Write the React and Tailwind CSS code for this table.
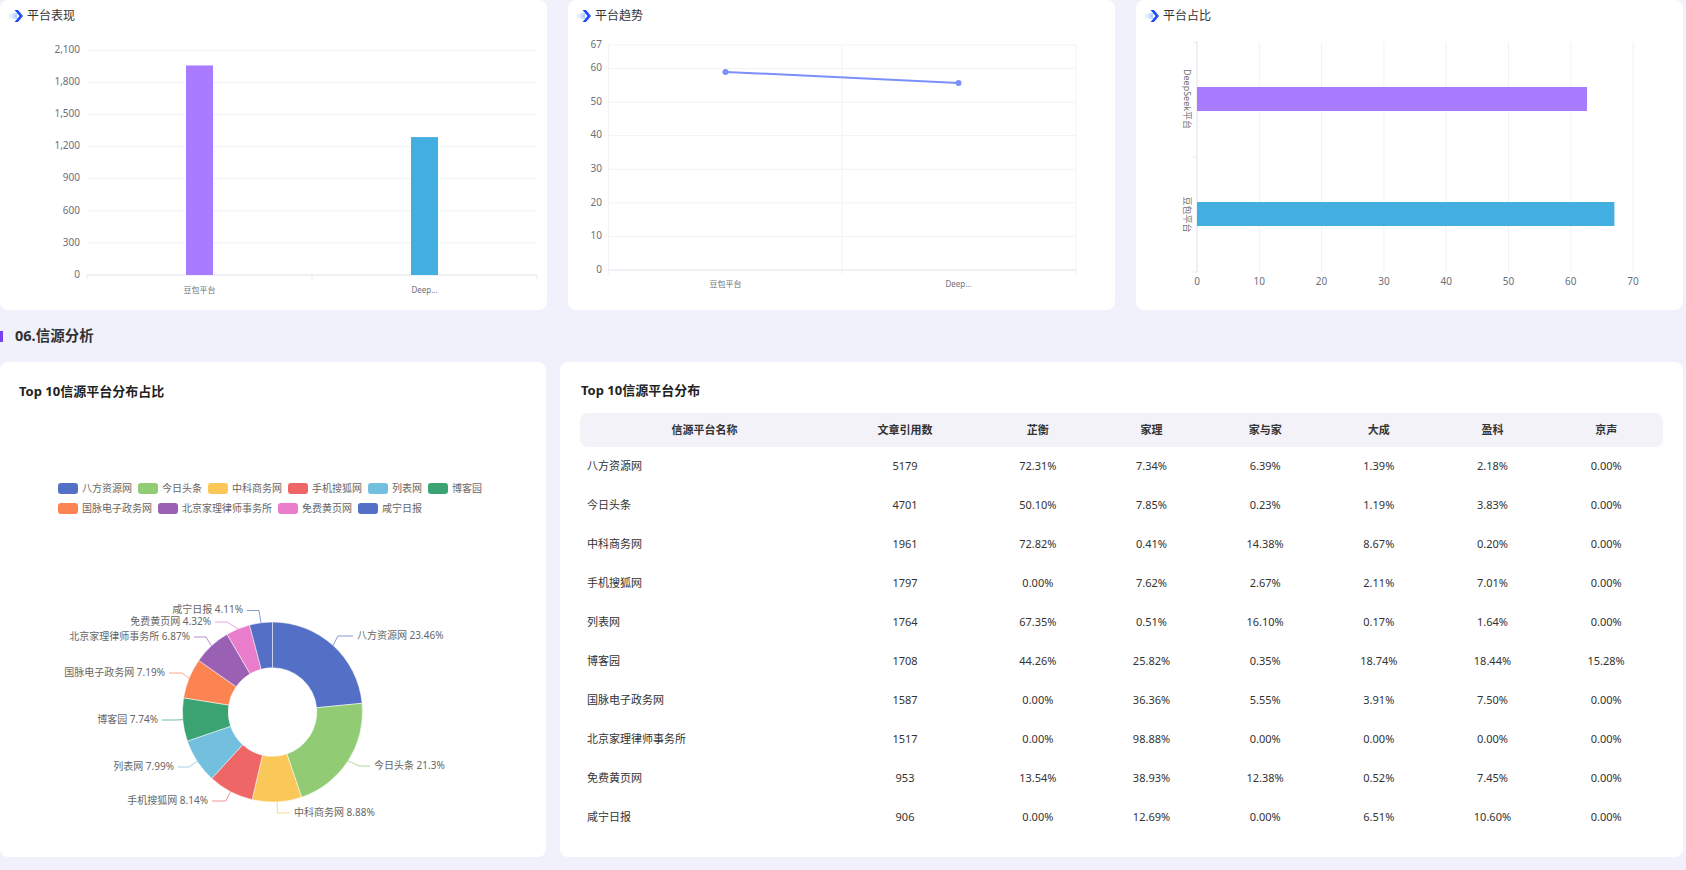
import React from 'react';

const PIE = [
  { name: '八方资源网', value: 23.46, color: '#5470c6', tx: 357, ty: 636, anchor: 'start', bx: 338 },
  { name: '今日头条', value: 21.3, color: '#91cc75', tx: 374, ty: 766, anchor: 'start', bx: 359 },
  { name: '中科商务网', value: 8.88, color: '#fac858', tx: 294, ty: 813, anchor: 'start', bx: 277.5 },
  { name: '手机搜狐网', value: 8.14, color: '#ee6666', tx: 208, ty: 801, anchor: 'end', bx: 225.7 },
  { name: '列表网', value: 7.99, color: '#73c0de', tx: 174, ty: 767, anchor: 'end', bx: 189 },
  { name: '博客园', value: 7.74, color: '#3ba272', tx: 158, ty: 720, anchor: 'end', bx: 175 },
  { name: '国脉电子政务网', value: 7.19, color: '#fc8452', tx: 165, ty: 673, anchor: 'end', bx: 182 },
  { name: '北京家理律师事务所', value: 6.87, color: '#9a60b4', tx: 190, ty: 637, anchor: 'end', bx: 206 },
  { name: '免费黄页网', value: 4.32, color: '#ea7ccc', tx: 211, ty: 622, anchor: 'end', bx: 227 },
  { name: '咸宁日报', value: 4.11, color: '#5470c6', tx: 243, ty: 610.5, anchor: 'end', bx: 259 },
];

const ROWS = [
  ['八方资源网', '5179', '72.31%', '7.34%', '6.39%', '1.39%', '2.18%', '0.00%'],
  ['今日头条', '4701', '50.10%', '7.85%', '0.23%', '1.19%', '3.83%', '0.00%'],
  ['中科商务网', '1961', '72.82%', '0.41%', '14.38%', '8.67%', '0.20%', '0.00%'],
  ['手机搜狐网', '1797', '0.00%', '7.62%', '2.67%', '2.11%', '7.01%', '0.00%'],
  ['列表网', '1764', '67.35%', '0.51%', '16.10%', '0.17%', '1.64%', '0.00%'],
  ['博客园', '1708', '44.26%', '25.82%', '0.35%', '18.74%', '18.44%', '15.28%'],
  ['国脉电子政务网', '1587', '0.00%', '36.36%', '5.55%', '3.91%', '7.50%', '0.00%'],
  ['北京家理律师事务所', '1517', '0.00%', '98.88%', '0.00%', '0.00%', '0.00%', '0.00%'],
  ['免费黄页网', '953', '13.54%', '38.93%', '12.38%', '0.52%', '7.45%', '0.00%'],
  ['咸宁日报', '906', '0.00%', '12.69%', '0.00%', '6.51%', '10.60%', '0.00%'],
];

const HEADERS = ['信源平台名称', '文章引用数', '芷衡', '家理', '家与家', '大成', '盈科', '京声'];
const AXIS = '#6e7079';
const GRID = '#f1f2f6';

function TitleIcon() {
  return (
    <svg width="16" height="12" viewBox="0 0 16 12">
      <defs>
        <linearGradient id="tailGrad" x1="0" x2="1" y1="0" y2="0">
          <stop offset="0" stopColor="#d6e6ff" stopOpacity="0" />
          <stop offset="1" stopColor="#9fc4ff" />
        </linearGradient>
      </defs>
      <rect x="0" y="3.5" width="10" height="5" rx="1" fill="url(#tailGrad)" />
      <path d="M7.5 0 H11 L16 6 L11 12 H7.5 L12.5 6 Z" fill="#1f4ef5" />
    </svg>
  );
}

function ChartCard({ title, children }) {
  return (
    <div className="bg-white rounded-lg h-[310px] overflow-hidden">
      <div className="h-[32px] flex items-center pl-[7px] gap-[4px]">
        <TitleIcon />
        <span className="text-[12px] text-[#333]">{title}</span>
      </div>
      <svg width="547" height="278" viewBox="0 32 547 278" className="block">
        {children}
      </svg>
    </div>
  );
}

function BarChart() {
  const y0 = 275;
  const k = 32.07 / 300;
  const ticks = [0, 300, 600, 900, 1200, 1500, 1800, 2100];
  const bars = [
    { x: 186, v: 1960, color: '#a87bff', label: '豆包平台', cx: 199.5 },
    { x: 411, v: 1290, color: '#43aee0', label: 'Deep...', cx: 424.5 },
  ];
  return (
    <>
      {ticks.map((t) => (
        <g key={t}>
          <line x1="87" x2="537" y1={y0 - t * k} y2={y0 - t * k} stroke={GRID} />
          <text x="80" y={y0 - t * k} textAnchor="end" dominantBaseline="middle" fontSize="10" fill={AXIS}>
            {t.toLocaleString('en-US')}
          </text>
        </g>
      ))}
      <line x1="87" x2="537" y1={y0} y2={y0} stroke="#e6e8ef" />
      {[87, 312, 537].map((x) => (
        <line key={x} x1={x} x2={x} y1={y0} y2={y0 + 4} stroke="#e6e8ef" />
      ))}
      {bars.map((b) => (
        <g key={b.label}>
          <rect x={b.x} y={y0 - b.v * k} width="27" height={b.v * k} fill={b.color} />
          <text x={b.cx} y="291" textAnchor="middle" dominantBaseline="middle" fontSize="8" fill={AXIS}>
            {b.label}
          </text>
        </g>
      ))}
    </>
  );
}

function LineChart() {
  const y0 = 270;
  const k = 3.358;
  const ticks = [0, 10, 20, 30, 40, 50, 60, 67];
  const pts = [
    { x: 157.5, v: 59, label: '豆包平台' },
    { x: 390.5, v: 55.7, label: 'Deep...' },
  ];
  return (
    <>
      {ticks.map((t) => (
        <g key={t}>
          <line x1="40.5" x2="508" y1={y0 - t * k} y2={y0 - t * k} stroke={GRID} />
          <text x="34" y={y0 - t * k} textAnchor="end" dominantBaseline="middle" fontSize="10" fill={AXIS}>
            {t}
          </text>
        </g>
      ))}
      {[40.5, 274, 508].map((x) => (
        <line key={x} x1={x} x2={x} y1={y0 - 67 * k} y2={y0 + 4} stroke={GRID} />
      ))}
      <line x1="40.5" x2="508" y1={y0} y2={y0} stroke="#e6e8ef" />
      <polyline
        points={pts.map((p) => `${p.x},${y0 - p.v * k}`).join(' ')}
        fill="none"
        stroke="#7b90fa"
        strokeWidth="2"
      />
      {pts.map((p) => (
        <g key={p.label}>
          <circle cx={p.x} cy={y0 - p.v * k} r="3" fill="#7b90fa" />
          <text x={p.x} y="285" textAnchor="middle" dominantBaseline="middle" fontSize="8" fill={AXIS}>
            {p.label}
          </text>
        </g>
      ))}
    </>
  );
}

function HBarChart() {
  const x0 = 61;
  const k = 6.23;
  const ticks = [0, 10, 20, 30, 40, 50, 60, 70];
  const bars = [
    { y: 87, v: 62.6, color: '#a87bff', label: 'DeepSeek平台', cy: 99 },
    { y: 202, v: 67, color: '#43aee0', label: '豆包平台', cy: 214.5 },
  ];
  return (
    <>
      {ticks.map((t) => (
        <g key={t}>
          <line x1={x0 + t * k} x2={x0 + t * k} y1="42" y2="272" stroke={GRID} />
          <text x={x0 + t * k} y="282" textAnchor="middle" dominantBaseline="middle" fontSize="10" fill={AXIS}>
            {t}
          </text>
        </g>
      ))}
      <line x1={x0} x2={x0} y1="42" y2="272" stroke="#e6e8ef" />
      {[42, 157, 272].map((y) => (
        <line key={y} x1={x0 - 4} x2={x0} y1={y} y2={y} stroke="#e6e8ef" />
      ))}
      {bars.map((b) => (
        <g key={b.label}>
          <rect x={x0} y={b.y} width={b.v * k} height="24" fill={b.color} />
          <text
            x="50"
            y={b.cy}
            transform={`rotate(90 50 ${b.cy})`}
            textAnchor="middle"
            dominantBaseline="middle"
            fontSize="9"
            fill={AXIS}
          >
            {b.label}
          </text>
        </g>
      ))}
    </>
  );
}

function arcPath(cx, cy, R, r, a0, a1) {
  const p = (rad, a) => [cx + rad * Math.sin(a), cy - rad * Math.cos(a)];
  const large = a1 - a0 > Math.PI ? 1 : 0;
  const [x1, y1] = p(R, a0);
  const [x2, y2] = p(R, a1);
  const [x3, y3] = p(r, a1);
  const [x4, y4] = p(r, a0);
  return `M${x1} ${y1} A${R} ${R} 0 ${large} 1 ${x2} ${y2} L${x3} ${y3} A${r} ${r} 0 ${large} 0 ${x4} ${y4} Z`;
}

function PieChart() {
  const cx = 272.5;
  const cy = 350;
  const R = 90;
  const r = 44.3;
  const total = PIE.reduce((s, d) => s + d.value, 0);
  let acc = 0;
  return (
    <svg width="546" height="339" viewBox="0 156 546 339" className="block">
      {PIE.map((d) => {
        const a0 = (acc / total) * Math.PI * 2;
        acc += d.value;
        const a1 = (acc / total) * Math.PI * 2;
        const mid = (a0 + a1) / 2;
        const ex = cx + R * Math.sin(mid);
        const ey = cy - R * Math.cos(mid);
        const ty = d.ty - 362;
        const lx = d.anchor === 'start' ? d.tx - 4 : d.tx + 4;
        return (
          <g key={d.name}>
            <path d={arcPath(cx, cy, R, r, a0, a1)} fill={d.color} stroke="#fff" strokeWidth="0.5" />
            <polyline
              points={`${ex},${ey} ${d.bx},${ty} ${lx},${ty}`}
              fill="none"
              stroke={d.color}
              strokeOpacity="0.7"
            />
            <text x={d.tx} y={ty} textAnchor={d.anchor} dominantBaseline="middle" fontSize="10" fill="#666">
              {d.name} {d.value}%
            </text>
          </g>
        );
      })}
    </svg>
  );
}

function LegendItem({ name, color }) {
  return (
    <div className="flex shrink-0 items-center gap-[4px] mr-[6px] whitespace-nowrap">
      <span className="w-[20px] h-[11px] shrink-0 rounded-[3px]" style={{ background: color }} />
      <span className="text-[10px] text-[#666] leading-[20px]">{name}</span>
    </div>
  );
}

export default function App() {
  return (
    <div className="w-[1686px] h-[870px] overflow-hidden bg-[#f0f1fa] pr-[3px] font-['Noto_Sans','Noto_Sans_CJK_SC',sans-serif]">
      {/* top charts */}
      <div className="grid grid-cols-3 gap-[21px]">
        <ChartCard title="平台表现">
          <BarChart />
        </ChartCard>
        <ChartCard title="平台趋势">
          <LineChart />
        </ChartCard>
        <ChartCard title="平台占比">
          <HBarChart />
        </ChartCard>
      </div>

      {/* section header */}
      <div className="h-[52px] flex items-center">
        <span className="w-[3px] h-[11px] bg-[#7b3ff2]" />
        <h2 className="ml-[12px] text-[14.5px] font-bold text-[#333]">06.信源分析</h2>
      </div>

      <div className="grid grid-cols-[546px_1fr] gap-[14px]">
        {/* pie card */}
        <div className="bg-white rounded-lg h-[495px] overflow-hidden">
          <h3 className="pt-[20px] pl-[19px] text-[13px] leading-[18px] font-bold text-[#222]">Top 10信源平台分布占比</h3>
          <div className="mt-[78px] h-[40px] w-fit mx-auto">
            <div className="flex">
              {PIE.slice(0, 6).map((d) => (
                <LegendItem key={d.name} name={d.name} color={d.color} />
              ))}
            </div>
            <div className="flex">
              {PIE.slice(6).map((d) => (
                <LegendItem key={d.name} name={d.name} color={d.color} />
              ))}
            </div>
          </div>
          <PieChart />
        </div>

        {/* table card */}
        <div className="bg-white rounded-lg h-[495px] px-[20px]">
          <h3 className="pt-[19px] pl-[1px] text-[13px] leading-[18px] font-bold text-[#222]">Top 10信源平台分布</h3>
          <table className="mt-[14px] w-full table-fixed border-collapse text-[11px] text-[#333]">
            <colgroup>
              <col className="w-[249px]" />
              <col className="w-[152px]" />
              <col />
              <col />
              <col />
              <col />
              <col />
              <col />
            </colgroup>
            <thead>
              <tr className="h-[34px]">
                {HEADERS.map((h, i) => (
                  <th
                    key={h}
                    className={`bg-[#f2f2f8] font-bold text-center ${i === 0 ? 'rounded-l-lg' : ''} ${
                      i === HEADERS.length - 1 ? 'rounded-r-lg' : ''
                    }`}
                  >
                    {h}
                  </th>
                ))}
              </tr>
            </thead>
            <tbody>
              {ROWS.map((row) => (
                <tr key={row[0]} className="h-[39px]">
                  {row.map((c, i) => (
                    <td key={i} className={i === 0 ? 'pl-[7px] text-left' : 'text-center'}>
                      {c}
                    </td>
                  ))}
                </tr>
              ))}
            </tbody>
          </table>
        </div>
      </div>
    </div>
  );
}
